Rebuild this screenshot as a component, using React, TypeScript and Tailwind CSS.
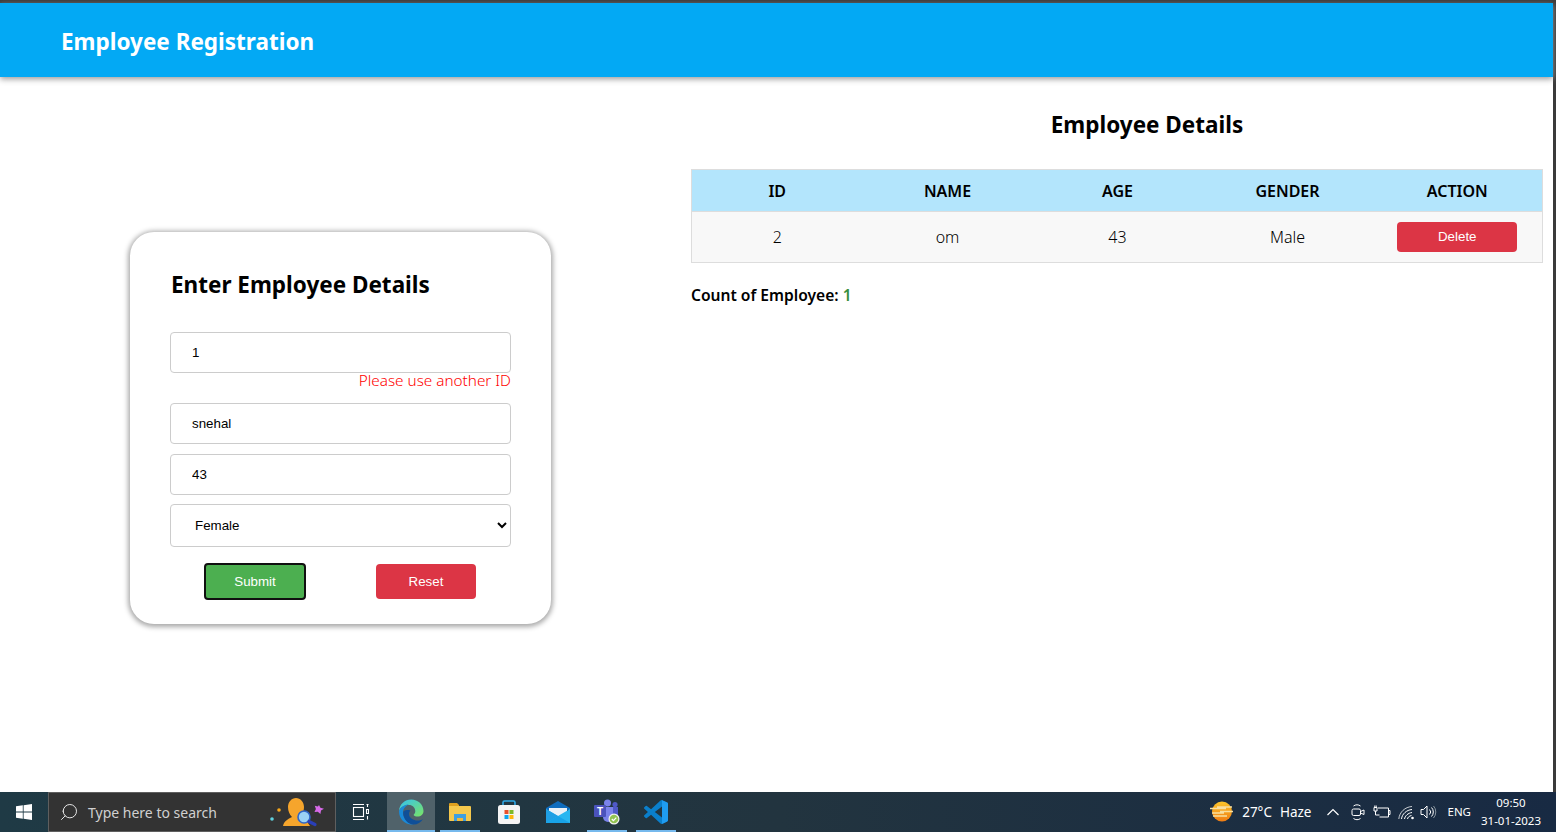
import React from "react";
import { Search } from "lucide-react";

const seg = "font-['Noto_Sans','Open_Sans',sans-serif]";
const arial = "font-['Liberation_Sans',Arial,sans-serif]";

const inputCls = `block w-[341px] h-[41px] border border-[#cccccc] rounded-[4px] pl-[21px] pr-[8px] text-[13.33px] text-black bg-white outline-none ${arial}`;

function WinLogo() {
  return (
    <svg width="16" height="16" viewBox="0 0 16 16" fill="#fff">
      <path d="M0 2.3 6.8 1.3V7.6H0zM7.6 1.2 16 0V7.6H7.6zM0 8.4H6.8V14.7L0 13.7zM7.6 8.4H16V16L7.6 14.8z" />
    </svg>
  );
}

function SearchBuddy() {
  return (
    <svg width="56" height="32" viewBox="0 0 56 32">
      <circle cx="3" cy="23" r="1.800" fill="#5fd0dc" />
      <circle cx="10" cy="14" r="1.800" fill="#f7a81b" />
      <path d="M14 30c1-5 5-7 9-9-2.500-2.500-4-6-4-10 0-5 3.500-9 8-9s8 4 8 9c0 3-.8 5-2 7l8 12z" fill="#f6a52c" />
      <circle cx="35" cy="21" r="6" fill="#9ad2f5" stroke="#2f66c8" strokeWidth="1.600" />
      <path d="M40 25.500l6 3" stroke="#2a3fb8" strokeWidth="3.200" strokeLinecap="round" />
      <path d="M50 9l1.400 2.800 3.600 1-3 1.800-.6 3.400-2.600-2.300-3.300.3 1.400-3-1.100-3.200 3.100.8z" fill="#d86ae8" />
    </svg>
  );
}

function TaskView() {
  return (
    <svg width="17" height="16" viewBox="0 0 17 16" fill="none" stroke="#fff" strokeWidth="1.100">
      <rect x="1.500" y="3.500" width="10" height="9" />
      <path d="M1 .5h11M1 15.500h11M14.500 .5h2M14.500 5.500h2v4h-2zM15.500 .5v2.500M15.500 12v3.500" />
    </svg>
  );
}

function EdgeIcon() {
  return (
    <svg width="26" height="26" viewBox="0 0 26 26">
      <defs>
        <linearGradient id="e2" x1="0" y1="0" x2="1" y2="1">
          <stop offset="0" stopColor="#35c1f1" />
          <stop offset="1" stopColor="#7be563" />
        </linearGradient>
      </defs>
      <path d="M1 12C1.500 5 7 .5 13.200 .5 20 .5 25.500 5.600 25.500 12c0 3.500-2.700 5.500-6 5.500-2.200 0-3.800-.8-3.800-1.600 0-.6 1.600-1.300 1.600-3.600C17.300 8.500 14.500 6 11 6 6 6 2.500 8.500 1 12z" fill="url(#e2)" />
      <path d="M1 12C2.500 8 6.500 5.500 11 5.500c-3.200 1-6 4-6 8 0 5 3.800 10.500 10.500 12C7.500 26.500 .8 20.500 1 12z" fill="#1a8ad8" />
      <path d="M5.200 14c0 6 5 11.500 10.300 11.500 4 0 7.500-2 9.500-5.500-1.500 1-3.500 1.500-5.500 1.500-4 0-8.500-2.500-8.500-6.500 0-1.400 .5-2.500 1.500-3.500C8.500 10.500 5.200 11 5.200 14z" fill="#0f4f98" />
    </svg>
  );
}

function FolderIcon() {
  return (
    <svg width="22" height="20" viewBox="0 0 22 20">
      <path d="M0 2a1 1 0 0 1 1-1h7l2 2v3H0z" fill="#dea01f" />
      <path d="M0 4h21a1 1 0 0 1 1 1v13a1 1 0 0 1-1 1H1a1 1 0 0 1-1-1z" fill="#f5c84c" />
      <path d="M5 12h12v7h-3v-3H8v3H5z" fill="#3f9fe0" />
      <rect x="8" y="16" width="6" height="3" fill="#f0b93a" />
    </svg>
  );
}

function StoreIcon() {
  return (
    <svg width="24" height="24" viewBox="0 0 24 24">
      <path d="M6 6V2.500C6 1.500 6.500 1 7.500 1h9c1 0 1.500 .5 1.500 1.500V6" fill="none" stroke="#2fa9e6" strokeWidth="1.600" />
      <rect x="1" y="5" width="22" height="19" rx="2.500" fill="#f4f4f4" />
      <rect x="7.500" y="10" width="4" height="4" fill="#e8502a" />
      <rect x="12.500" y="10" width="4" height="4" fill="#7db929" />
      <rect x="7.500" y="15" width="4" height="4" fill="#0ea4ee" />
      <rect x="12.500" y="15" width="4" height="4" fill="#fdb60d" />
    </svg>
  );
}

function MailIcon() {
  return (
    <svg width="24" height="22" viewBox="0 0 24 22">
      <path d="M0 7 12 0l12 7v2H0z" fill="#0f6cbd" />
      <path d="M3 7h18v8H3z" fill="#eaf1f7" />
      <path d="M0 8l12 7 12-7v14H0z" fill="#29b6f0" />
      <path d="M0 8l12 7L0 22z" fill="#1f9fe4" />
      <path d="M0 22l12-7 12 7z" fill="#18a3e8" />
    </svg>
  );
}

function TeamsIcon() {
  return (
    <svg width="26" height="26" viewBox="0 0 26 26">
      <circle cx="13.500" cy="4" r="3.500" fill="#7b83eb" />
      <circle cx="21" cy="5.500" r="2.600" fill="#5059c9" />
      <path d="M9 8h10v10a5 5 0 0 1-10 0z" fill="#7b83eb" />
      <path d="M19 8h5v8a3 3 0 0 1-5 1z" fill="#5059c9" />
      <rect x="0" y="6" width="12" height="12" rx="1" fill="#4b53bc" />
      <text x="6" y="15.500" textAnchor="middle" fontSize="10" fontWeight="700" fill="#fff" fontFamily="Liberation Sans">T</text>
      <circle cx="20" cy="20" r="5.500" fill="#f2f2f2" />
      <circle cx="20" cy="20" r="4.300" fill="#92c353" />
      <path d="M17.800 20l1.600 1.600 2.900-3" fill="none" stroke="#fff" strokeWidth="1.200" />
    </svg>
  );
}

function VSCodeIcon() {
  return (
    <svg width="24" height="24" viewBox="0 0 24 24">
      <path d="M23.150 2.587 18.210 .21a1.494 1.494 0 0 0-1.705 .29l-9.460 8.630-4.120-3.128a.999 .999 0 0 0-1.276 .057L.327 7.261A1 1 0 0 0 .326 8.740L3.899 12 .326 15.260a1 1 0 0 0 .001 1.479L1.650 17.940a.999 .999 0 0 0 1.276 .057l4.120-3.128 9.460 8.630a1.492 1.492 0 0 0 1.704 .29l4.942-2.377A1.500 1.500 0 0 0 24 20.060V3.939a1.500 1.500 0 0 0-.850-1.352zm-5.146 14.861L10.826 12l7.178-5.448v10.896z" fill="#0a7fcb" />
      <path d="M18.010 23.800a1.500 1.500 0 0 0 .7-.150l4.440-2.240A1.500 1.500 0 0 0 24 20.060V3.939a1.500 1.500 0 0 0-.850-1.352L18.210 .21a1.500 1.500 0 0 0-.2-.08v6.420v10.900z" fill="#1f9cf0" />
    </svg>
  );
}

function SunIcon() {
  return (
    <svg width="24" height="22" viewBox="0 0 24 22">
      <defs>
        <linearGradient id="s1" x1="0" y1="0" x2="0" y2="1">
          <stop offset="0" stopColor="#fcc52b" />
          <stop offset="1" stopColor="#ef7c13" />
        </linearGradient>
      </defs>
      <circle cx="12" cy="10.500" r="10" fill="url(#s1)" />
      <path d="M0 7.500h16M7 6h15M2 12h12M10 10.500h13M3 15h14" stroke="#f8dfa0" strokeWidth="1.300" />
    </svg>
  );
}

function MeetIcon() {
  return (
    <svg width="14" height="18" viewBox="0 0 14 18" fill="none" stroke="#fff" strokeWidth="1">
      <rect x="1" y="6" width="8.500" height="6.500" rx="1.500" />
      <path d="M9.500 8.500 13 7v4.500l-3.500-1.500M2.500 3c2-1.600 5-1.600 7 0M2.500 15.500c2 1.600 5 1.600 7 0" />
    </svg>
  );
}

function PlugBattery() {
  return (
    <svg width="18" height="14" viewBox="0 0 18 14" fill="none" stroke="#fff" strokeWidth="1">
      <path d="M1 2.500h3v3.500H1zM1.800 .5v2M3.200 .5v2M2.500 6v4h4" />
      <path d="M5 3h10.500v9H6.500M15.500 5.500H17v4h-1.500" />
    </svg>
  );
}

function WifiIcon() {
  return (
    <svg width="18" height="15" viewBox="0 0 18 15" fill="none" stroke="#fff" strokeWidth="1">
      <path d="M.8 14C1.500 7 7 2 14 1.500" opacity=".75" />
      <path d="M3.500 14C4 9 8.500 5 14 4.500" />
      <path d="M6.500 14C7 11 10 8 14 7.500" />
      <path d="M9.500 14c.2-1.500 1.500-3 4-3.500" />
      <circle cx="14.500" cy="13" r="1.300" fill="#fff" stroke="none" />
    </svg>
  );
}

function Speaker() {
  return (
    <svg width="17" height="16" viewBox="0 0 17 16" fill="none" stroke="#fff" strokeWidth="1">
      <path d="M1 5.500h2.500L7 2v12l-3.500-3.500H1z" />
      <path d="M9.500 5.500a3.500 3.500 0 0 1 0 5M11.500 3.500a6.500 6.500 0 0 1 0 9" />
      <path d="M13.500 2a9 9 0 0 1 0 12" stroke="#8a96a0" />
    </svg>
  );
}

function TaskBtn({ active, line, children, className }: { active?: boolean; line?: boolean; children: React.ReactNode; className?: string }) {
  return (
    <div className={`relative flex h-[40px] items-center justify-center ${active ? "w-[48px] bg-[#50626a]" : "w-[40px]"} ${className ?? ""}`}>
      {children}
      {line && <span className="absolute bottom-0 left-0 right-0 h-[2px] bg-[#76b9ed]" />}
    </div>
  );
}

export default function App() {
  return (
    <div className={`flex h-[832px] w-[1556px] flex-col overflow-hidden bg-white ${seg}`}>
      <div className="h-[3px] shrink-0 bg-[#3b3b3b]" />
      <div className="flex min-h-0 flex-1">
        <div className="flex min-w-0 flex-1 flex-col">
          <header className="relative z-10 flex h-[74px] shrink-0 items-center bg-[#03a9f4] pl-[61px] pt-[5px] shadow-[0_2px_6px_#999999]">
            <h1 className="text-[22.5px] leading-none font-bold text-white">Employee Registration</h1>
          </header>
          <main className="flex flex-1">
            <section className="w-[691px] shrink-0 pl-[130px] pt-[155px]">
              <div className="flex h-[392px] w-[421px] flex-col rounded-[24px] bg-white pl-[40px] pt-[36px] shadow-[0_1px_5px_2px_#aaaaaa]">
                <h2 className="h-[64px] pl-[1px] text-[22.5px] leading-[33px] font-bold text-black">Enter Employee Details</h2>
                <input className={inputCls} readOnly value="1" />
                <div className="h-[30px] w-[341px] text-right text-[15.3px] leading-[14px] font-light text-[#ff0000]">Please use another ID</div>
                <input className={inputCls} readOnly value="snehal" />
                <input className={`${inputCls} mt-[10px]`} readOnly value="43" />
                <select defaultValue="Female" className={`mt-[9px] block h-[43px] w-[341px] rounded-[4px] border border-[#cccccc] bg-white pl-[20px] text-[13.33px] text-black outline-none ${arial}`}>
                  <option>Male</option>
                  <option>Female</option>
                </select>
                <div className={`mt-[16px] flex items-center pl-[34px] ${arial}`}>
                  <button className="h-[37px] w-[102px] rounded-[4px] border-2 border-[#101010] bg-[#4caf50] text-[13.33px] text-white">Submit</button>
                  <button className="ml-[70px] h-[35px] w-[100px] rounded-[4px] bg-[#dc3545] text-[13.33px] text-white">Reset</button>
                </div>
              </div>
            </section>
            <section className="flex-1 pt-[31px]">
              <h2 className="h-[61px] w-[852px] pl-[60px] pt-[1px] text-center text-[22.5px] leading-[32px] font-bold text-black">Employee Details</h2>
              <table className="w-[852px] table-fixed border-collapse border border-[#dddddd] text-[16px] text-black">
                <thead>
                  <tr className="h-[42px] bg-[#b3e5fc]">
                    <th className="w-[171px] font-semibold">ID</th>
                    <th className="w-[170px] font-semibold">NAME</th>
                    <th className="w-[170px] font-semibold">AGE</th>
                    <th className="w-[170px] font-semibold">GENDER</th>
                    <th className="font-semibold">ACTION</th>
                  </tr>
                </thead>
                <tbody>
                  <tr className="h-[51px] border-t border-[#dddddd] bg-[#f8f8f8] text-center font-light">
                    <td>2</td>
                    <td>om</td>
                    <td>43</td>
                    <td>Male</td>
                    <td className="align-top pt-[10px]">
                      <button className={`block mx-auto h-[30px] w-[120px] rounded-[4px] bg-[#dc3545] text-[13.33px] pb-[1px] text-white ${arial}`}>Delete</button>
                    </td>
                  </tr>
                </tbody>
              </table>
              <p className="mt-[21px] text-[15.6px] leading-[22px] font-semibold text-black">
                Count of Employee: <span className="text-[#388e3c]">1</span>
              </p>
            </section>
          </main>
        </div>
        <div className="w-[3px] shrink-0 bg-[#3b3b3b]" />
      </div>
      <footer className="flex h-[40px] shrink-0 items-center bg-linear-to-r from-[#1f3a45] via-[#22343f] to-[#182a43] text-white">
        <div className="flex h-[40px] w-[48px] items-center justify-center"><WinLogo /></div>
        <div className="flex h-[40px] w-[288px] items-center border border-[#5f5f5f] bg-[#333333] pl-[10px] pr-[10px]">
          <Search className="h-[20px] w-[20px] -scale-x-100 text-[#e6e6e6]" strokeWidth={1.200} />
          <span className="ml-[9px] flex-1 text-[14px] text-[#d0d0d0]">Type here to search</span>
          <SearchBuddy />
        </div>
        <div className="flex w-[48px] justify-center"><TaskView /></div>
        <TaskBtn active line className="ml-[3px]"><EdgeIcon /></TaskBtn>
        <TaskBtn line className="ml-[5px]"><FolderIcon /></TaskBtn>
        <TaskBtn className="ml-[9px]"><StoreIcon /></TaskBtn>
        <TaskBtn className="ml-[9px]"><MailIcon /></TaskBtn>
        <TaskBtn line className="ml-[9px]"><TeamsIcon /></TaskBtn>
        <TaskBtn line className="ml-[9px]"><VSCodeIcon /></TaskBtn>
        <div className="ml-auto flex items-center whitespace-nowrap">
          <SunIcon />
          <span className="ml-[8px] text-[13.5px]">27°C</span>
          <span className="ml-[8px] text-[13.5px]">Haze</span>
          <svg className="ml-[16px]" width="12" height="8" viewBox="0 0 12 8" fill="none" stroke="#fff" strokeWidth="1.200"><path d="M.5 7 6 1.500 11.500 7" /></svg>
          <span className="ml-[12px] flex"><MeetIcon /></span>
          <span className="ml-[8px] flex"><PlugBattery /></span>
          <span className="ml-[7px] flex"><WifiIcon /></span>
          <span className="ml-[4px] flex"><Speaker /></span>
          <span className="ml-[10px] text-[11.5px]">ENG</span>
          <div className="ml-[9px] flex w-[62px] flex-col items-center text-[11.5px] leading-[18px]">
            <span>09:50</span>
            <span>31-01-2023</span>
          </div>
          <div className="w-[14px]" />
        </div>
      </footer>
    </div>
  );
}
